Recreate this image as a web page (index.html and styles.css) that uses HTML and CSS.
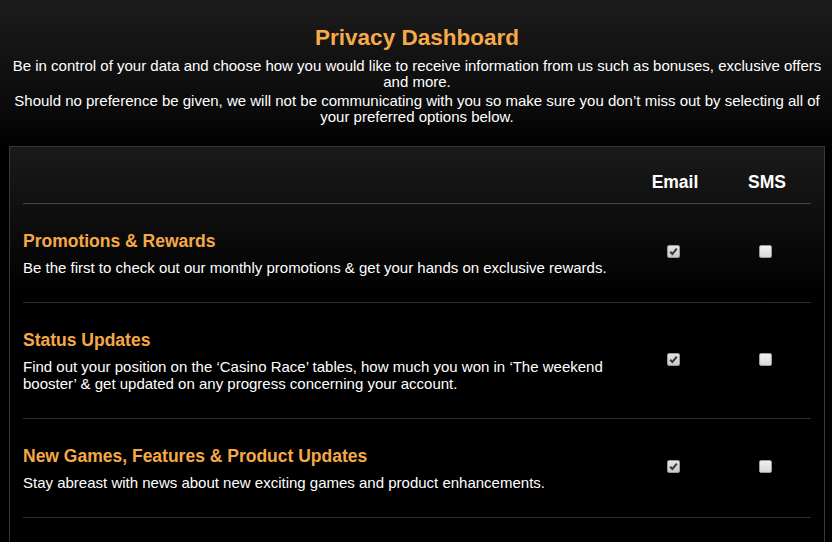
FILE: index.html
```html
<!DOCTYPE html>
<html>
<head>
<meta charset="utf-8">
<link rel="stylesheet" href="styles.css">
</head>
<body>
<div class="page">
  <header class="intro">
    <h1 class="title">Privacy Dashboard</h1>
    <p class="lead">Be in control of your data and choose how you would like to receive information from us such as bonuses, exclusive offers and more.</p>
    <p class="lead">Should no preference be given, we will not be communicating with you so make sure you don’t miss out by selecting all of your preferred options below.</p>
  </header>
  <section class="panel">
    <div class="row head">
      <div class="info"></div>
      <div class="col">Email</div>
      <div class="col">SMS</div>
    </div>
    <div class="row item">
      <div class="info">
        <h2 class="item-title">Promotions &amp; Rewards</h2>
        <p class="item-desc">Be the first to check out our monthly promotions &amp; get your hands on exclusive rewards.</p>
      </div>
      <div class="col"><span class="box checked"><svg viewBox="0 0 13 13" width="13" height="13"><path d="M3.2 6.8 L5.4 9 L9.8 3.6" fill="none" stroke="#3a3a3a" stroke-width="2"/></svg></span></div>
      <div class="col"><span class="box"></span></div>
    </div>
    <div class="row item">
      <div class="info">
        <h2 class="item-title">Status Updates</h2>
        <p class="item-desc">Find out your position on the ‘Casino Race’ tables, how much you won in ‘The weekend booster’ &amp; get updated on any progress concerning your account.</p>
      </div>
      <div class="col"><span class="box checked"><svg viewBox="0 0 13 13" width="13" height="13"><path d="M3.2 6.8 L5.4 9 L9.8 3.6" fill="none" stroke="#3a3a3a" stroke-width="2"/></svg></span></div>
      <div class="col"><span class="box"></span></div>
    </div>
    <div class="row item">
      <div class="info">
        <h2 class="item-title">New Games, Features &amp; Product Updates</h2>
        <p class="item-desc">Stay abreast with news about new exciting games and product enhancements.</p>
      </div>
      <div class="col"><span class="box checked"><svg viewBox="0 0 13 13" width="13" height="13"><path d="M3.2 6.8 L5.4 9 L9.8 3.6" fill="none" stroke="#3a3a3a" stroke-width="2"/></svg></span></div>
      <div class="col"><span class="box"></span></div>
    </div>
  </section>
</div>
</body>
</html>
```
FILE: styles.css
```css
html, body {
  margin: 0;
  padding: 0;
  height: 100%;
}
body {
  background: #000;
  font-family: "Liberation Sans", Arial, sans-serif;
  color: #fff;
}
.page {
  background: linear-gradient(to bottom, #1c1c1c 0px, #0a0a0a 110px, #000 150px);
  min-height: 100%;
  padding: 25px 7px 0 9px;
  box-sizing: border-box;
}
.intro {
  text-align: center;
}
.title {
  margin: 0 0 7px;
  font-size: 22.5px;
  line-height: 26px;
  font-weight: bold;
  color: #f7aa48;
}
.lead {
  margin: 0;
  font-size: 15px;
  line-height: 16px;
}
.lead + .lead {
  margin-top: 3px;
}
.panel {
  margin-top: 21px;
  box-sizing: border-box;
  border: 1px solid #3a3a2c;
  border-bottom: none;
  padding: 0 13px;
  background: linear-gradient(to bottom, #1a1a1a 0px, #0b0b0b 90px, #000 150px);
  min-height: 400px;
}
.row {
  display: flex;
  align-items: center;
}
.info {
  flex: 1;
  min-width: 0;
  padding-right: 10px;
}
.col {
  width: 92px;
  box-sizing: border-box;
  flex: none;
  text-align: center;
  display: flex;
  justify-content: center;
}
.head {
  height: 56px;
  align-items: flex-start;
  border-bottom: 1px solid #4a4632;
}
.head .col {
  font-size: 17.5px;
  font-weight: bold;
  line-height: 20px;
  padding-top: 25px;
  padding-left: 4px;
}
.item {
  padding: 27px 0 26px;
  border-bottom: 1px solid #2f2f2b;
}
.item-title {
  margin: 0 0 8px;
  font-size: 17.5px;
  line-height: 20px;
  font-weight: bold;
  color: #f5a946;
}
.item-desc {
  margin: 0;
  font-size: 15px;
  line-height: 17px;
}
.box {
  width: 11px;
  height: 11px;
  border: 1px solid #9a9a9a;
  border-radius: 2px;
  background: linear-gradient(to bottom, #f0f0f0, #d8d8d8);
  position: relative;
  display: block;
  margin-bottom: 4px;
}
.box.checked {
  background: linear-gradient(to bottom, #e4e4e4, #c8c8c8);
}
.box svg {
  position: absolute;
  left: -1px;
  top: -1px;
}
```
